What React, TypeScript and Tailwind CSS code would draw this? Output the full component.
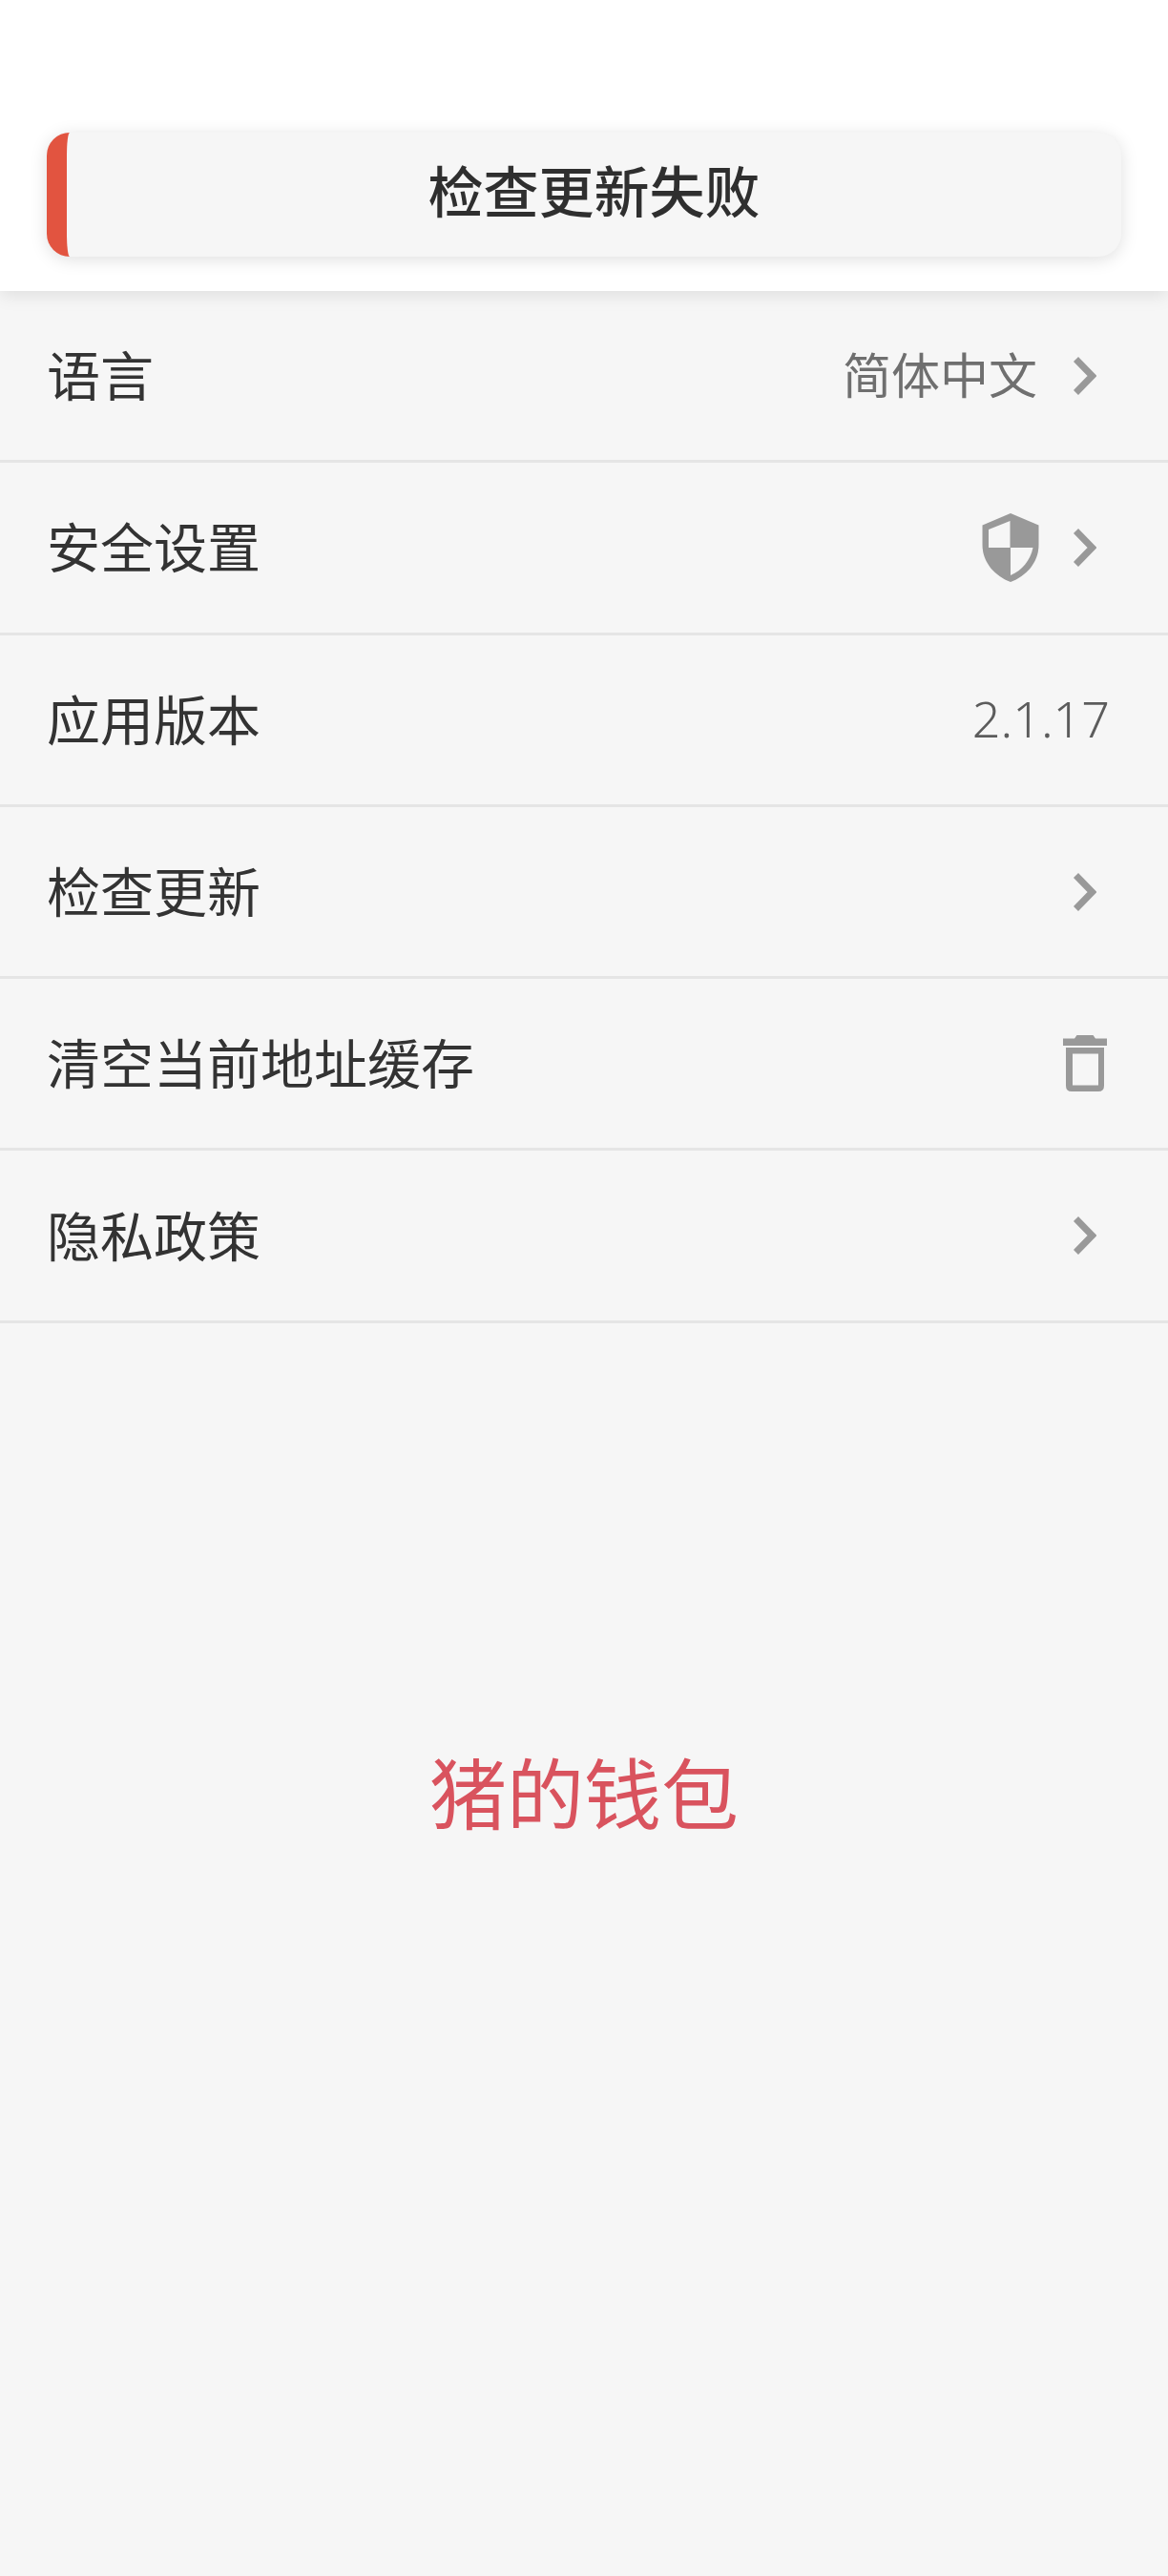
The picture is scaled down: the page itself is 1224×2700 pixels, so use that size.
const Chevron = () => (
  <svg width="24" height="40" viewBox="0 0 24 40" className="shrink-0 text-[#999999]">
    <path d="M2.5 2.5L19.5 20L2.5 37.5" fill="none" stroke="currentColor" strokeWidth="7" />
  </svg>
);

const Shield = () => (
  <svg width="60" height="72" viewBox="0 0 60 72" className="shrink-0">
    <path
      d="M30 0L59.500 12.500V33C59.500 52 46 66 30 72C14 66 .5 52 .5 33V12.500Z"
      fill="#999999"
    />
    <path d="M29.500 8L7 17V36H29.500Z" fill="#f6f6f6" />
    <path d="M30 36H53.500C51 49 42 60 30 65Z" fill="#f6f6f6" />
  </svg>
);

const Trash = () => (
  <svg width="46" height="60" viewBox="0 0 46 60" className="shrink-0">
    <path d="M0 3.500H12L14.500 0H31.500L34 3.500H46V11H0Z" fill="#999999" />
    <path
      d="M3 13H43V53Q43 59 37 59H9Q3 59 3 53ZM10 19.500V52.500H37V19.500Z"
      fill="#999999"
      fillRule="evenodd"
    />
  </svg>
);

const rows = [
  { label: "语言", value: "简体中文", icon: <Chevron />, right: "pr-[75px]" },
  { label: "安全设置", shield: true, icon: <Chevron />, right: "pr-[75px]" },
  { label: "应用版本", version: "2.1.17", right: "pr-[61px]" },
  { label: "检查更新", icon: <Chevron />, right: "pr-[75px]" },
  { label: "清空当前地址缓存", icon: <Trash />, right: "pr-[64px]" },
  { label: "隐私政策", icon: <Chevron />, right: "pr-[75px]" },
];

export default function App() {
  return (
    <div className="min-h-[2700px] bg-[#f6f6f6] font-['Noto_Sans_CJK_SC','Noto_Sans',sans-serif]">
      <header className="relative h-[305px] bg-white px-[49px] pt-[139px] shadow-[0_4px_18px_rgba(0,0,0,0.1)]">
        <div className="flex h-[130px] items-center justify-center rounded-[24px] border-l-[21px] border-[#e25440] bg-[#f6f6f6] shadow-[0_3px_18px_rgba(0,0,0,0.13)]">
          <span className="pb-[12px] text-[58px] font-medium leading-none text-[#2f2f2f]">检查更新失败</span>
        </div>
      </header>

      <ul>
        {rows.map((row) => (
          <li
            key={row.label}
            className={`flex h-[180.3px] items-center justify-between border-b-[3px] border-[#e5e5e5] pl-[49px] ${row.right}`}
          >
            <span className="pb-[5px] text-[56px] leading-none text-[#333333]">{row.label}</span>
            <div className="flex items-center">
              {row.value && (
                <span className="mr-[38px] pb-[5px] text-[51px] leading-none text-[#6f6f6f]">{row.value}</span>
              )}
              {row.shield && (
                <span className="mr-[36px] flex">
                  <Shield />
                </span>
              )}
              {row.version && (
                <span className="pb-[2px] font-['Noto_Sans',sans-serif] text-[52px] font-light leading-none text-[#5c5c5c]">
                  {row.version}
                </span>
              )}
              {row.icon}
            </div>
          </li>
        ))}
      </ul>

      <p className="mt-[439px] text-center text-[81px] leading-[100px] text-[#d9535e]">猪的钱包</p>
    </div>
  );
}
